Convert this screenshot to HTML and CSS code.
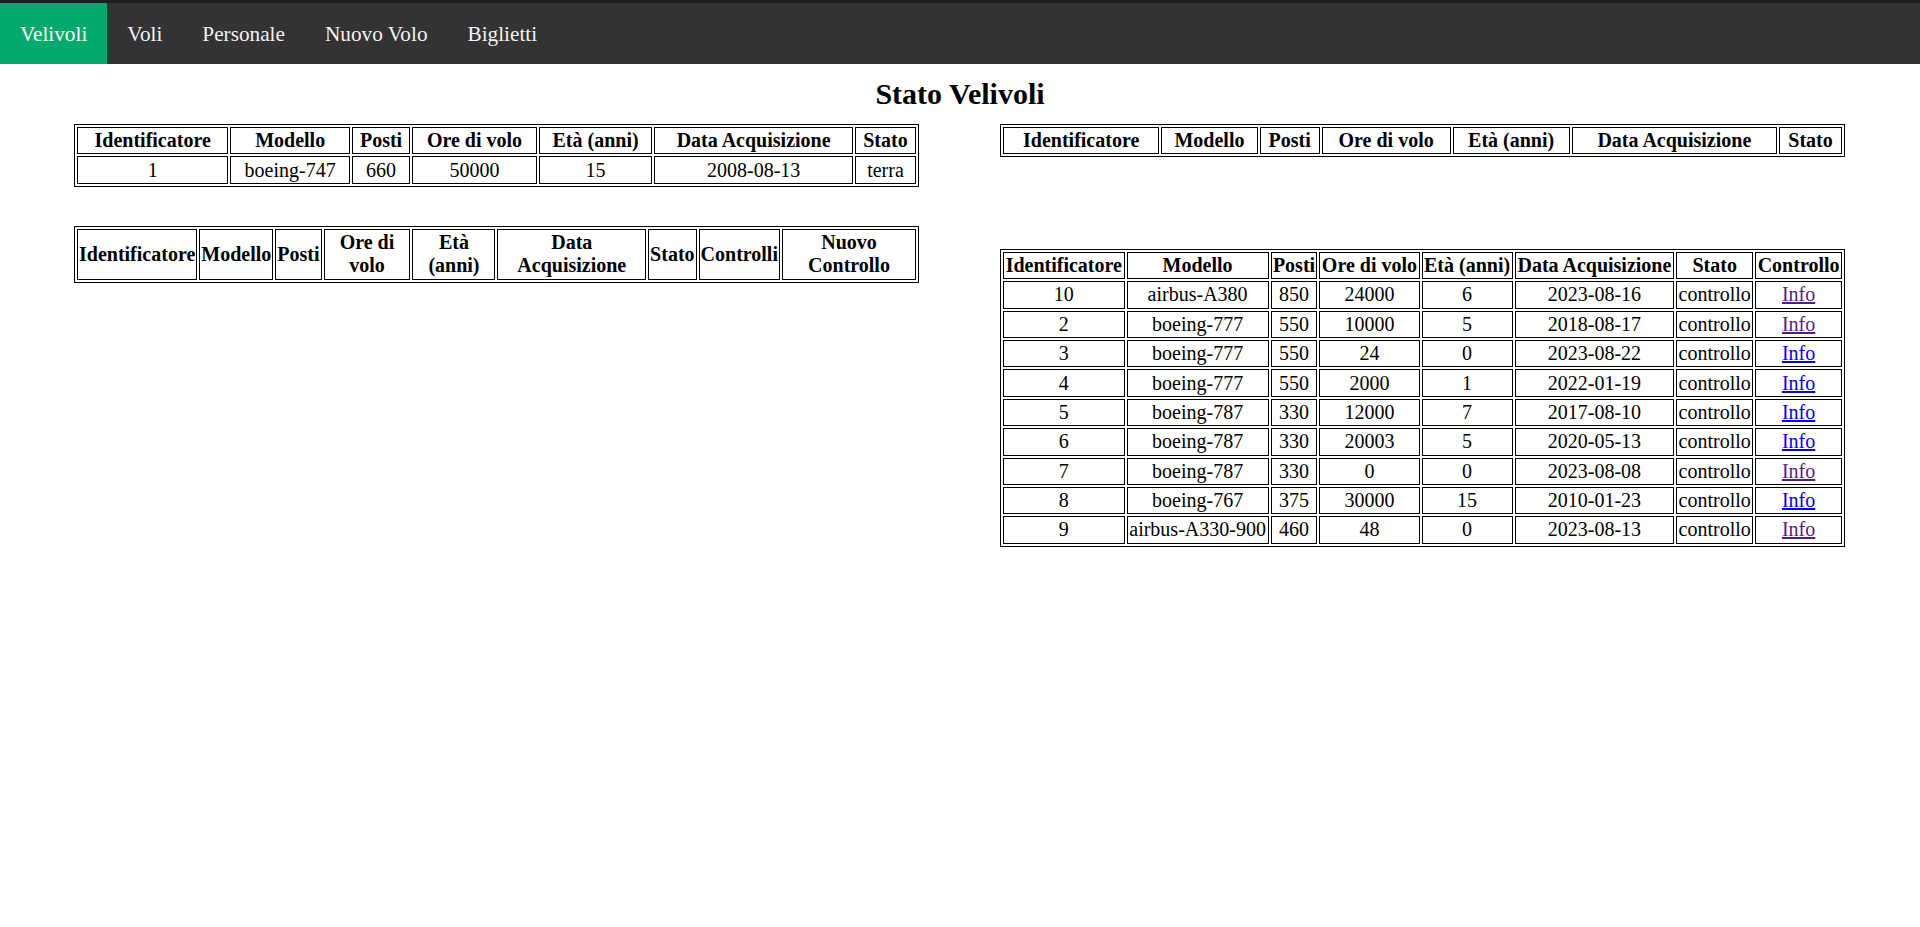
FILE: index.html
```html
<!DOCTYPE html>
<html lang="it">
<head>
<meta charset="utf-8">
<title>Stato Velivoli</title>
<link rel="stylesheet" href="styles.css">
</head>
<body>
<div class="topstrip"></div>
<nav class="topnav">
  <a class="active" href="#">Velivoli</a>
  <a href="#">Voli</a>
  <a href="#">Personale</a>
  <a href="#">Nuovo Volo</a>
  <a href="#">Biglietti</a>
</nav>
<h2 class="title">Stato Velivoli</h2>
<div class="columns">
  <div class="col">
    <table class="grid">
      <tr><th>Identificatore</th><th>Modello</th><th>Posti</th><th>Ore di volo</th><th>Età (anni)</th><th>Data Acquisizione</th><th>Stato</th></tr>
      <tr><td>1</td><td>boeing-747</td><td>660</td><td>50000</td><td>15</td><td>2008-08-13</td><td>terra</td></tr>
    </table>
    <table class="grid second-left">
      <tr><th>Identificatore</th><th>Modello</th><th>Posti</th><th>Ore di volo</th><th>Età (anni)</th><th>Data Acquisizione</th><th>Stato</th><th>Controlli</th><th>Nuovo Controllo</th></tr>
    </table>
  </div>
  <div class="col">
    <table class="grid">
      <tr><th>Identificatore</th><th>Modello</th><th>Posti</th><th>Ore di volo</th><th>Età (anni)</th><th>Data Acquisizione</th><th>Stato</th></tr>
    </table>
    <table class="grid second-right">
      <tr><th>Identificatore</th><th>Modello</th><th>Posti</th><th>Ore di volo</th><th>Età (anni)</th><th>Data Acquisizione</th><th>Stato</th><th>Controllo</th></tr>
      <tr><td>10</td><td>airbus-A380</td><td>850</td><td>24000</td><td>6</td><td>2023-08-16</td><td>controllo</td><td><a class="visited" href="#">Info</a></td></tr>
      <tr><td>2</td><td>boeing-777</td><td>550</td><td>10000</td><td>5</td><td>2018-08-17</td><td>controllo</td><td><a class="visited" href="#">Info</a></td></tr>
      <tr><td>3</td><td>boeing-777</td><td>550</td><td>24</td><td>0</td><td>2023-08-22</td><td>controllo</td><td><a class="link" href="#">Info</a></td></tr>
      <tr><td>4</td><td>boeing-777</td><td>550</td><td>2000</td><td>1</td><td>2022-01-19</td><td>controllo</td><td><a class="link" href="#">Info</a></td></tr>
      <tr><td>5</td><td>boeing-787</td><td>330</td><td>12000</td><td>7</td><td>2017-08-10</td><td>controllo</td><td><a class="link" href="#">Info</a></td></tr>
      <tr><td>6</td><td>boeing-787</td><td>330</td><td>20003</td><td>5</td><td>2020-05-13</td><td>controllo</td><td><a class="link" href="#">Info</a></td></tr>
      <tr><td>7</td><td>boeing-787</td><td>330</td><td>0</td><td>0</td><td>2023-08-08</td><td>controllo</td><td><a class="visited" href="#">Info</a></td></tr>
      <tr><td>8</td><td>boeing-767</td><td>375</td><td>30000</td><td>15</td><td>2010-01-23</td><td>controllo</td><td><a class="link" href="#">Info</a></td></tr>
      <tr><td>9</td><td>airbus-A330-900</td><td>460</td><td>48</td><td>0</td><td>2023-08-13</td><td>controllo</td><td><a class="visited" href="#">Info</a></td></tr>
    </table>
  </div>
</div>
</body>
</html>
```
FILE: styles.css
```css
html, body {
  margin: 0;
  padding: 0;
  background: #ffffff;
}
body {
  font-family: "Liberation Serif", "Times New Roman", serif;
  font-size: 20px;
  color: #000000;
}
.topstrip {
  height: 3px;
  background: #1d1e22;
}
.topnav {
  display: flex;
  background: #333333;
}
.topnav a {
  display: block;
  color: #f2f2f2;
  text-decoration: none;
  font-size: 21.25px;
  line-height: 26px;
  padding: 17.5px 20px;
}
.topnav a.active {
  background: #04aa6d;
  color: #ffffff;
}
.title {
  margin: 12.5px 0 13px;
  font-size: 30px;
  font-weight: bold;
  text-align: center;
  line-height: 34.5px;
}
.columns {
  display: flex;
  justify-content: space-between;
  align-items: flex-start;
  padding: 0 75px 0 74px;
}
.col {
  width: 845px;
}
.grid {
  width: 100%;
  border: 1px solid #000000;
  border-spacing: 2px;
}
.grid th, .grid td {
  border: 1px solid #000000;
  padding: 1.2px 1px;
  text-align: center;
}
.second-left {
  margin-top: 39.5px;
}
.second-right {
  margin-top: 91.5px;
}
a.visited {
  color: #551a8b;
}
a.link {
  color: #0000ee;
}
```
